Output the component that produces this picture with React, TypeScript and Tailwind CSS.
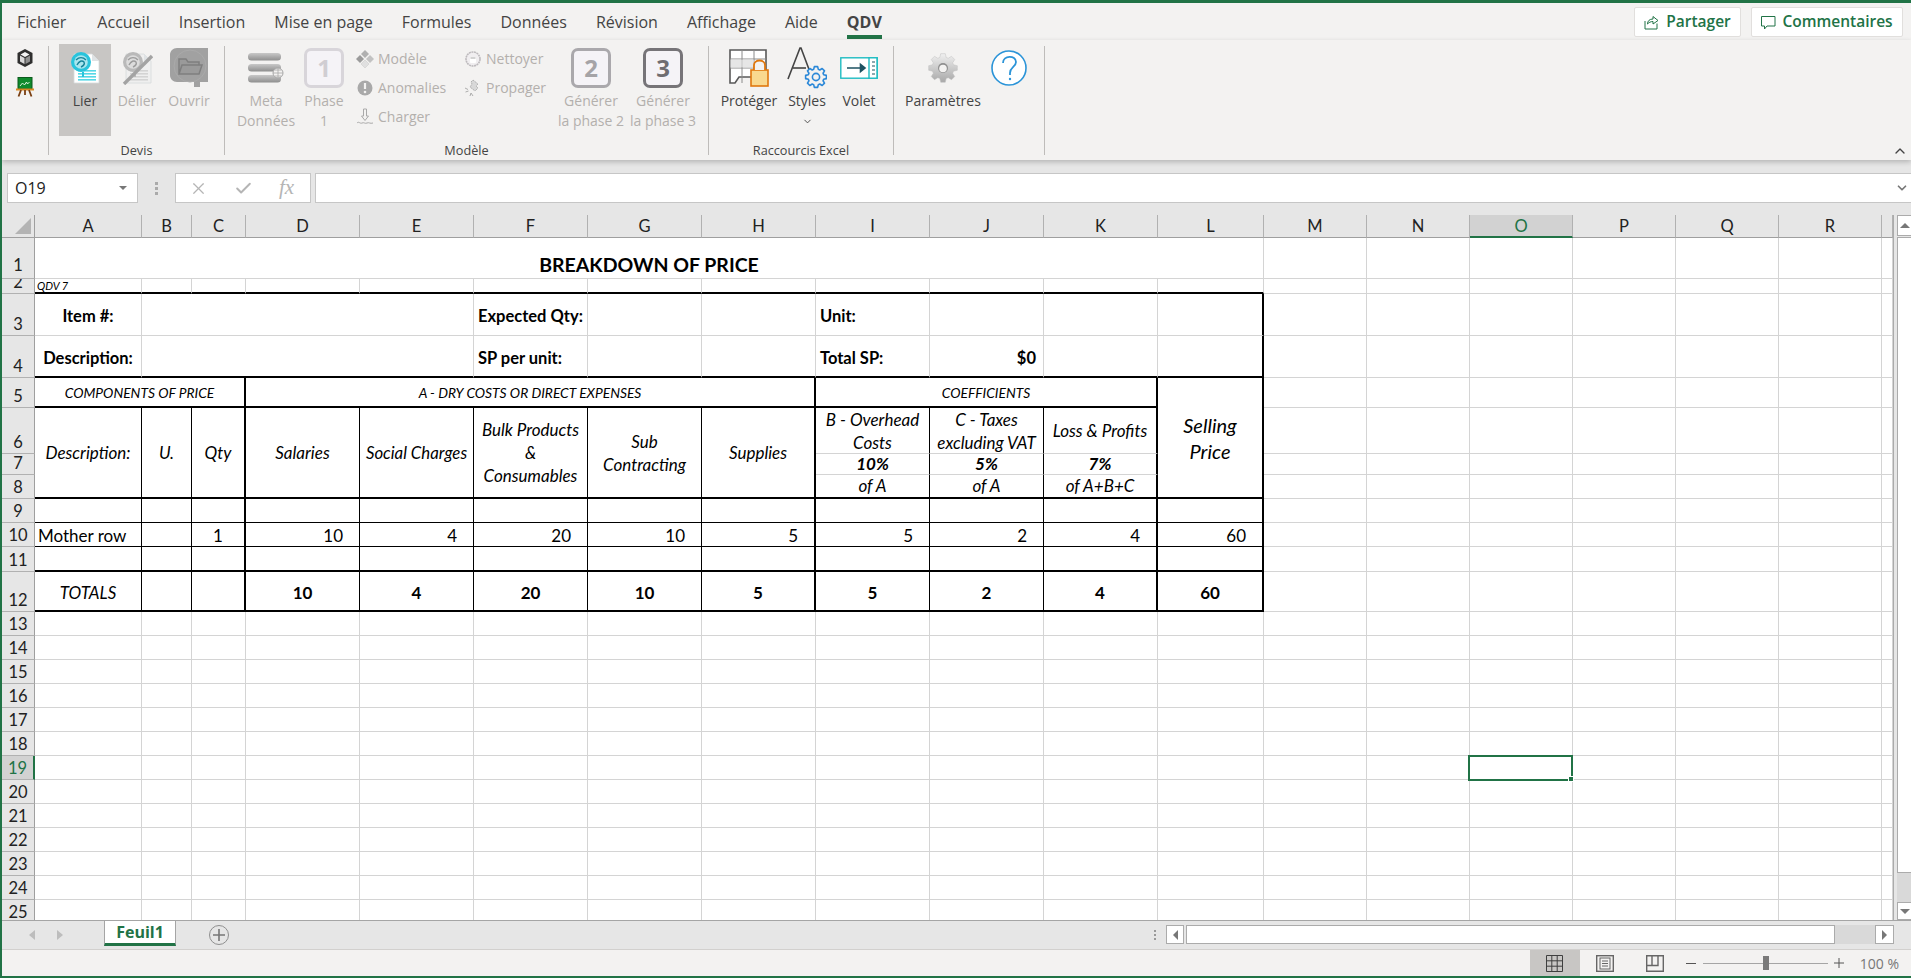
import React from "react"
import { Check, ChevronDown, ChevronUp, X } from "lucide-react"

const tabs = ["Fichier", "Accueil", "Insertion", "Mise en page", "Formules", "Données", "Révision", "Affichage", "Aide"]
const letters = ["A", "B", "C", "D", "E", "F", "G", "H", "I", "J", "K", "L", "M", "N", "O", "P", "Q", "R", ""]

const RIGHT = {
  g: "border-r border-r-[#d4d4d4]",
  t: "border-r border-r-black",
  k: "border-r-2 border-r-black",
}
const BOTTOM = {
  g: "border-b border-b-[#d4d4d4]",
  t: "border-b border-b-black",
  k: "border-b-2 border-b-black",
}
type Line = "g" | "t" | "k"

const gearPath = (cx: number, cy: number, ro: number, ri: number, n: number) => {
  const pts: string[] = []
  for (let i = 0; i < n; i++) {
    const a = (i / n) * Math.PI * 2
    const w = Math.PI / n
    const add = (r: number, t: number) =>
      pts.push(`${(cx + r * Math.cos(t)).toFixed(2)} ${(cy + r * Math.sin(t)).toFixed(2)}`)
    add(ri, a - w * 0.75)
    add(ro, a - w * 0.4)
    add(ro, a + w * 0.4)
    add(ri, a + w * 0.75)
  }
  return `M${pts.join("L")}Z`
}

function C({ r = "g", b = "g", className = "", children }: { r?: Line; b?: Line; className?: string; children?: React.ReactNode }) {
  return <div className={`${RIGHT[r]} ${BOTTOM[b]} flex min-w-0 overflow-hidden whitespace-nowrap ${className}`}>{children}</div>
}

function RH({ n, active }: { n: number; active?: boolean }) {
  return (
    <div
      className={`flex items-end justify-center overflow-hidden border-b border-b-[#b1b1b1] text-[16.5px] leading-[21px] ${n === 1 ? "pb-[2px]" : ""} ${
        active ? "border-r-2 border-r-[#217346] bg-[#d2d2d2] text-[#217346]" : "border-r border-r-[#9f9f9f] bg-[#e6e6e6] text-[#222]"
      }`}
    >
      {n}
    </div>
  )
}

function Tail({ b = "g" }: { b?: Line }) {
  return (
    <>
      {[0, 1, 2, 3, 4, 5, 6].map((i) => (
        <C key={i} b={b} />
      ))}
    </>
  )
}

// colonnes D..L des lignes 9 a 12
function DataRow({ n, b, vals, label, qty, bold }: { n: number; b: Line; vals?: (string | number)[]; label?: React.ReactNode; qty?: number; bold?: boolean }) {
  const align = bold ? "items-center justify-center pt-[3px] font-bold" : "items-center justify-end pt-[2px] pr-[16px]"
  const rights: Line[] = ["t", "t", "t", "t", "k", "t", "t", "k", "k"]
  return (
    <>
      <RH n={n} />
      <C r="t" b={b} className={bold ? "items-center justify-center pt-[3px] italic" : "items-center pt-[2px] pl-[3px]"}>
        {label}
      </C>
      <C r="t" b={b} />
      <C r="k" b={b} className="items-center justify-center pt-[2px]">
        {qty}
      </C>
      {rights.map((r, i) => (
        <C key={i} r={r} b={b} className={align}>
          {vals ? vals[i] : null}
        </C>
      ))}
      <Tail />
    </>
  )
}

function Sheet() {
  return (
    <div className="grid h-full w-[1891px] flex-none grid-cols-[33px_107px_50px_54px_repeat(8,114px)_106px_repeat(6,103px)_11px] grid-rows-[23px_41px_15px_42px_42px_30px_46px_21px_24px_24px_24px_25px_40px_repeat(13,24px)] overflow-hidden bg-white text-[17px] leading-[20px] text-black [font-family:Lato,sans-serif]">
      <div className="flex items-end justify-end border-r border-b border-r-[#9f9f9f] border-b-[#9f9f9f] bg-[#e6e6e6] pr-[3px] pb-[3px]">
        <div className="h-0 w-0 border-b-[16px] border-l-[16px] border-b-[#b4b4b4] border-l-transparent" />
      </div>
      {letters.map((l, i) => (
        <div
          key={i}
          className={`flex items-center justify-center text-[16.5px] ${
            l === "O"
              ? "border-r border-b-2 border-r-[#b1b1b1] border-b-[#217346] bg-[#d2d2d2] text-[#217346]"
              : "border-r border-b border-r-[#b1b1b1] border-b-[#9f9f9f] bg-[#e6e6e6] text-[#222]"
          }`}
        >
          {l}
        </div>
      ))}

      <RH n={1} />
      <C className="col-span-12 items-center justify-center pt-[13px] text-[19.5px] font-bold">BREAKDOWN OF PRICE</C>
      <Tail />

      <RH n={2} />
      <C b="k" className="items-center pl-[2px] text-[11px] italic">
        QDV 7
      </C>
      {[0, 1, 2, 3, 4, 5, 6, 7, 8, 9, 10].map((i) => (
        <C key={i} b="k" />
      ))}
      <Tail />

      <RH n={3} />
      <C className="items-center justify-center pt-[2px] text-[16.5px] font-bold">Item #:</C>
      <C className="col-span-4" />
      <C className="items-center pt-[2px] pl-[4px] text-[16.5px] font-bold">Expected Qty:</C>
      <C />
      <C />
      <C className="items-center pt-[2px] pl-[4px] text-[16.5px] font-bold">Unit:</C>
      <C />
      <C />
      <C r="k" />
      <Tail />

      <RH n={4} />
      <C b="k" className="items-center justify-center pt-[3px] text-[16.5px] font-bold">
        Description:
      </C>
      <C b="k" className="col-span-4" />
      <C b="k" className="items-center pt-[3px] pl-[4px] text-[16.5px] font-bold">
        SP per unit:
      </C>
      <C b="k" />
      <C b="k" />
      <C b="k" className="items-center pt-[3px] pl-[4px] text-[16.5px] font-bold">
        Total SP:
      </C>
      <C b="k" className="items-center justify-end pt-[3px] pr-[7px] text-[16.5px] font-bold">
        $0
      </C>
      <C b="k" />
      <C r="k" b="k" />
      <Tail />

      <RH n={5} />
      <C r="k" b="k" className="col-span-3 items-center justify-center pt-[1px] text-[13.8px] italic">
        COMPONENTS OF PRICE
      </C>
      <C r="k" b="k" className="col-span-5 items-center justify-center pt-[1px] text-[13.8px] italic">
        A - DRY COSTS OR DIRECT EXPENSES
      </C>
      <C r="k" b="k" className="col-span-3 items-center justify-center pt-[1px] text-[13.8px] italic">
        COEFFICIENTS
      </C>
      <C r="k" b="k" className="row-span-4 flex-col items-center justify-center text-[20px] leading-[26px] italic">
        <span>Selling</span>
        <span>Price</span>
      </C>
      <Tail />

      <RH n={6} />
      <C r="t" b="k" className="row-span-3 items-center justify-center italic">
        Description:
      </C>
      <C r="t" b="k" className="row-span-3 items-center justify-center italic">
        U.
      </C>
      <C r="k" b="k" className="row-span-3 items-center justify-center italic">
        Qty
      </C>
      <C r="t" b="k" className="row-span-3 items-center justify-center italic">
        Salaries
      </C>
      <C r="t" b="k" className="row-span-3 items-center justify-center text-[16.8px] italic">
        Social Charges
      </C>
      <C r="t" b="k" className="row-span-3 flex-col items-center justify-center leading-[23px] italic">
        <span>Bulk Products</span>
        <span>&amp;</span>
        <span>Consumables</span>
      </C>
      <C r="t" b="k" className="row-span-3 flex-col items-center justify-center leading-[23px] italic">
        <span>Sub</span>
        <span>Contracting</span>
      </C>
      <C r="k" b="k" className="row-span-3 items-center justify-center italic">
        Supplies
      </C>
      <C r="t" className="flex-col items-center justify-center leading-[23px] italic">
        <span>B - Overhead</span>
        <span>Costs</span>
      </C>
      <C r="t" className="flex-col items-center justify-center leading-[23px] italic">
        <span>C - Taxes</span>
        <span>excluding VAT</span>
      </C>
      <C r="k" className="items-center justify-center italic">
        Loss &amp; Profits
      </C>
      <Tail />

      <RH n={7} />
      <C r="t" className="items-center justify-center font-bold italic">
        10%
      </C>
      <C r="t" className="items-center justify-center font-bold italic">
        5%
      </C>
      <C r="k" className="items-center justify-center font-bold italic">
        7%
      </C>
      <Tail />

      <RH n={8} />
      <C r="t" b="k" className="items-center justify-center italic">
        of A
      </C>
      <C r="t" b="k" className="items-center justify-center italic">
        of A
      </C>
      <C r="k" b="k" className="items-center justify-center italic">
        of A+B+C
      </C>
      <Tail />

      <DataRow n={9} b="t" />
      <DataRow n={10} b="t" label="Mother row" qty={1} vals={[10, 4, 20, 10, 5, 5, 2, 4, 60]} />
      <DataRow n={11} b="k" />
      <DataRow n={12} b="k" label="TOTALS" bold vals={[10, 4, 20, 10, 5, 5, 2, 4, 60]} />

      {[13, 14, 15, 16, 17, 18, 19, 20, 21, 22, 23, 24, 25].map((n) => (
        <React.Fragment key={n}>
          <RH n={n} active={n === 19} />
          {letters.map((l, i) =>
            n === 19 && l === "O" ? (
              <div key={i} className="relative border-r border-b border-r-[#d4d4d4] border-b-[#d4d4d4]">
                <div className="absolute -top-px -right-px -bottom-[2px] -left-[2px] z-10 border-2 border-[#217346]" />
                <div className="absolute -right-[2px] -bottom-[3px] z-20 h-[6px] w-[6px] border border-white bg-[#217346]" />
              </div>
            ) : (
              <C key={i} />
            )
          )}
        </React.Fragment>
      ))}
    </div>
  )
}

function CubeIcon() {
  return (
    <svg width="18" height="20" viewBox="0 0 18 20">
      <path d="M9 1l7.5 4v10L9 19l-7.5-4V5z" fill="#2f2f2f" />
      <path d="M4.5 6.5L9 4l4.5 2.5L9 9z" fill="#f4f4f4" />
      <path d="M4 7.5l4.5 2.5v6L4 13.5z" fill="#d9d9d9" />
      <path d="M14 7.5L9.5 10v6l4.5-2.5z" fill="#8f8f8f" />
    </svg>
  )
}

function BoardIcon() {
  return (
    <svg width="18" height="20" viewBox="0 0 18 20">
      <rect x="2" y="0.5" width="14" height="11.5" fill="#0f8a2c" stroke="#0b5a1c" />
      <path d="M4 9l2.5-3 2 2 2-3 1 2 2-2" stroke="#eaf9ea" fill="none" strokeWidth="0.9" />
      <path d="M0 12.5h18" stroke="#d98a24" strokeWidth="2" />
      <path d="M5 13l-2.5 6.5M13 13l2.5 6.5M9 13v5" stroke="#7a3f12" strokeWidth="1.8" />
    </svg>
  )
}

function DocIcon({ muted }: { muted?: boolean }) {
  const ring = muted ? "#b9b9b9" : "#29c4dc"
  const inner = muted ? "#dcdcdc" : "#a9e6ee"
  const line = muted ? "#d4d4d4" : "#55d8e6"
  return (
    <svg width="32" height="34" viewBox="0 0 32 34">
      <path d="M5 3h18l7 7v22H5z" fill={muted ? "#efefef" : "#fff"} stroke="#d6dadc" strokeWidth="0.8" />
      <path d="M23 3l7 7h-7z" fill="#dfe3e5" />
      {[19, 22, 25, 28].map((y) => (
        <rect key={y} x="9" y={y} width="18" height="1.6" fill={line} />
      ))}
      <circle cx="12" cy="11" r="10" fill={ring} />
      <circle cx="12" cy="11" r="6.8" fill={inner} />
      <path d="M7 9c3-3 7-3 10 0M8 14c2-4 5-5 7-3 1 2-1 4-3 5" stroke={muted ? "#9c9c9c" : "#17849a"} strokeWidth="1.4" fill="none" />
      <path d="M14 21v5" stroke={ring} strokeWidth="2" />
      {muted && <path d="M3 33L31 5" stroke="#a3a3a3" strokeWidth="3.4" />}
    </svg>
  )
}

function FolderIcon() {
  return (
    <svg width="38" height="39" viewBox="0 0 38 39">
      <path d="M7 0h31v34h-8v5h-6v-5H7c-4 0-7-3-7-7V7c0-4 3-7 7-7z" fill="#a1a1a1" />
      <circle cx="20" cy="18" r="16" fill="none" stroke="#aaaaaa" strokeWidth="1" />
      <path d="M9 26V11h7l2 3h11v3M9 26l3-9h20l-3 9z" fill="#9a9a9a" stroke="#7f7f7f" strokeWidth="1.5" />
    </svg>
  )
}

function StackIcon() {
  return (
    <svg width="36" height="30" viewBox="0 0 36 30">
      <defs>
        <linearGradient id="bar" x1="0" x2="0" y1="0" y2="1">
          <stop offset="0" stopColor="#c8c8c8" />
          <stop offset="1" stopColor="#8e8e8e" />
        </linearGradient>
      </defs>
      <rect x="0" y="0" width="33" height="7.5" rx="3.5" fill="url(#bar)" />
      <rect x="0" y="11" width="33" height="7.5" rx="3.5" fill="url(#bar)" />
      <rect x="0" y="22" width="33" height="7.5" rx="3.5" fill="url(#bar)" />
      <circle cx="30" cy="20" r="5" fill="#f3f2f1" stroke="#a8a8a8" />
      <path d="M25 20h10M30 15v10M26.5 17h7M26.5 23h7" stroke="#a8a8a8" strokeWidth="0.8" />
    </svg>
  )
}

function NumBox({ n, tone }: { n: number; tone: 1 | 2 | 3 }) {
  const cls =
    tone === 1
      ? "border-[#d8d5da] text-[#d0cdd2]"
      : tone === 2
        ? "border-[#aaa8ac] text-[#a5a3a7]"
        : "border-[#767478] text-[#6f6d71]"
  return <div className={`flex h-[40px] w-[40px] items-center justify-center rounded-[7px] border-[3px] bg-[#f5f3f7] text-[24px] font-bold ${cls}`}>{n}</div>
}

function SmallIcon({ kind }: { kind: string }) {
  if (kind === "model")
    return (
      <svg width="18" height="18" viewBox="0 0 18 18">
        <path d="M9 0l4 4-4 4-4-4z" fill="#b0b0b0" />
        <path d="M4 5l4 4-4 4-4-4z" fill="#9b9b9b" />
        <path d="M14 5l4 4-4 4-4-4z" fill="#c2c2c2" />
        <path d="M9 10l4 4-4 4-4-4z" fill="#e0e0e0" stroke="#c8c8c8" strokeWidth="0.5" />
      </svg>
    )
  if (kind === "anom")
    return (
      <svg width="18" height="18" viewBox="0 0 18 18">
        <circle cx="9" cy="9" r="7.5" fill="#a9a9a9" />
        <path d="M9 4v6" stroke="#f3f2f1" strokeWidth="2.2" />
        <circle cx="9" cy="13" r="1.3" fill="#f3f2f1" />
      </svg>
    )
  if (kind === "load")
    return (
      <svg width="18" height="18" viewBox="0 0 18 18">
        <path d="M7.5 1h3v7h2L9 12.5 5.5 8h2z" fill="none" stroke="#a9a9a9" />
        <path d="M1 15c2-2 3 1 5 0s3 1 5 0 3 1 6 0" fill="none" stroke="#a9a9a9" />
      </svg>
    )
  if (kind === "clean")
    return (
      <svg width="16" height="16" viewBox="0 0 16 16">
        <circle cx="8" cy="8" r="7" fill="#f0eef0" stroke="#bdbabd" strokeWidth="1.6" strokeDasharray="2 0.6" />
        <rect x="5" y="6" width="6" height="6" rx="1" fill="#fff" />
        <path d="M5.5 7h5" stroke="#a5a5a5" />
      </svg>
    )
  return (
    <svg width="18" height="18" viewBox="0 0 18 18">
      <path d="M9 1l5 4-2 2 2 2-3 3-5-4 2-3-1-2z" fill="#d8d8d8" stroke="#9f9f9f" strokeWidth="0.8" strokeDasharray="1.5 0.7" />
      <path d="M1 9l3 1.5M1.5 13l3-1M6 17l1-3M9 17l-2-3" stroke="#a5a5a5" strokeWidth="0.9" />
    </svg>
  )
}

function TableLockIcon() {
  return (
    <svg width="40" height="38" viewBox="0 0 40 38">
      <path d="M1 1h36v27H10l-4 6H1z" fill="#fff" stroke="#595959" strokeWidth="1.6" />
      <path d="M1 10h36M1 19h24M13 1v33M25 1v20" stroke="#8a8a8a" strokeWidth="1" />
      <rect x="1.5" y="10.5" width="11" height="8" fill="#e6e6e6" />
      <rect x="13.5" y="10.5" width="11" height="8" fill="#e6e6e6" />
      <rect x="22" y="21" width="17" height="16" fill="#f9d98f" stroke="#e0770d" strokeWidth="1.6" />
      <path d="M25 21v-5c0-6 11-6 11 0v5" fill="#f3f2f1" stroke="#e0770d" strokeWidth="1.8" />
    </svg>
  )
}

function StylesIcon() {
  return (
    <svg width="40" height="42" viewBox="0 0 40 42">
      <path d="M1 32L13 1h1l9 24" fill="none" stroke="#444" strokeWidth="1.6" />
      <path d="M6 21h13" stroke="#444" strokeWidth="1.6" />
      <path d={gearPath(29, 30, 10.5, 8, 8)} fill="#f3f2f1" stroke="#2b88d8" strokeWidth="1.6" strokeLinejoin="round" />
      <circle cx="29" cy="30" r="3.6" fill="none" stroke="#2b88d8" strokeWidth="1.6" />
    </svg>
  )
}

function VoletIcon() {
  return (
    <svg width="38" height="22" viewBox="0 0 38 22">
      <rect x="0.8" y="0.8" width="36.4" height="20.4" fill="#fff" stroke="#1ebcc2" strokeWidth="1.4" />
      <rect x="29" y="0.8" width="8" height="20.4" fill="#fff" stroke="#1ebcc2" strokeWidth="1.4" />
      <path d="M7 11h17M20.5 7.5L25 11l-4.5 3.5z" stroke="#1d5261" strokeWidth="1.6" fill="#1d5261" />
      <path d="M32 5h3M32 9h3M32 13h3M32 17h3" stroke="#1d5261" strokeWidth="1.2" />
    </svg>
  )
}

function GearIcon() {
  return (
    <svg width="30" height="30" viewBox="0 0 30 30">
      <defs>
        <linearGradient id="gr" x1="0" x2="0" y1="0" y2="1">
          <stop offset="0" stopColor="#f0f0f0" />
          <stop offset="1" stopColor="#a8a8a8" />
        </linearGradient>
      </defs>
      <path d={gearPath(15, 15, 14.5, 11, 8)} fill="url(#gr)" stroke="#c0c0c0" strokeWidth="0.5" strokeLinejoin="round" />
      <circle cx="15" cy="15" r="5" fill="#8e8e8e" />
      <circle cx="15" cy="15.5" r="3.8" fill="#f3f2f1" />
    </svg>
  )
}

function HelpIcon() {
  return (
    <svg width="36" height="36" viewBox="0 0 36 36">
      <circle cx="18" cy="18" r="17" fill="#fff" stroke="#2b94d8" strokeWidth="1.6" />
      <path d="M12 13c0-8 13-8 13-1 0 5-6 5-6 11v2" fill="none" stroke="#2b94d8" strokeWidth="1.8" />
      <circle cx="19" cy="29" r="1.2" fill="#2b94d8" />
    </svg>
  )
}

function RibbonBtn({ w, icon, lines, muted, active, children }: { w: string; icon?: React.ReactNode; lines?: string[]; muted?: boolean; active?: boolean; children?: React.ReactNode }) {
  return (
    <div className={`flex h-[92px] flex-col items-center ${w} ${active ? "bg-[#c8c6c4]" : ""}`}>
      <div className="flex h-[47px] items-center justify-center">{icon}</div>
      {(lines || []).map((l) => (
        <span key={l} className={`leading-[20px] whitespace-nowrap ${muted ? "text-[#b3b0ad]" : "text-[#444]"}`}>
          {l}
        </span>
      ))}
      {children}
    </div>
  )
}

function Group({ w, pl, label, children }: { w: string; pl: string; label: string; children: React.ReactNode }) {
  return (
    <div className={`flex h-full flex-none flex-col pt-[4px] ${w}`}>
      <div className={`flex h-[92px] ${pl}`}>{children}</div>
      <div className="mt-[4px] text-center text-[12.7px] leading-[20px] text-[#444]">{label}</div>
    </div>
  )
}

function Sep() {
  return <div className="mt-[6px] mb-[5px] w-px flex-none bg-[#bebcba]" />
}

function SmallRow({ kind, label, w }: { kind: string; label: string; w: string }) {
  return (
    <div className={`flex h-[29px] items-center gap-[4px] whitespace-nowrap text-[#b3b0ad] ${w}`}>
      <span className="flex w-[19px] justify-center">
        <SmallIcon kind={kind} />
      </span>
      {label}
    </div>
  )
}

function Ribbon() {
  return (
    <div className="relative z-10 flex h-[120px] flex-none bg-[#f3f2f1] text-[14px] shadow-[0_2px_5px_rgba(0,0,0,0.22)]">
      <div className="flex w-[46px] flex-none flex-col items-center gap-[9px] pt-[8px]">
        <CubeIcon />
        <BoardIcon />
      </div>
      <Sep />
      <Group w="w-[175px]" pl="pl-[10px]" label="Devis">
        <RibbonBtn w="w-[52px]" active icon={<DocIcon />} lines={["Lier"]} />
        <RibbonBtn w="w-[52px]" muted icon={<DocIcon muted />} lines={["Délier"]} />
        <RibbonBtn w="w-[52px]" muted icon={<FolderIcon />} lines={["Ouvrir"]} />
      </Group>
      <Sep />
      <Group w="w-[483px]" pl="pl-[5px]" label="Modèle">
        <RibbonBtn w="w-[72px]" muted icon={<StackIcon />} lines={["Meta", "Données"]} />
        <RibbonBtn w="w-[44px]" muted icon={<NumBox n={1} tone={1} />} lines={["Phase", "1"]} />
        <div className="ml-[9px] w-[108px]">
          <SmallRow w="w-[108px]" kind="model" label="Modèle" />
          <SmallRow w="w-[108px]" kind="anom" label="Anomalies" />
          <SmallRow w="w-[108px]" kind="load" label="Charger" />
        </div>
        <div className="w-[92px]">
          <SmallRow w="w-[92px]" kind="clean" label="Nettoyer" />
          <SmallRow w="w-[92px]" kind="prop" label="Propager" />
        </div>
        <RibbonBtn w="w-[72px]" muted icon={<NumBox n={2} tone={2} />} lines={["Générer", "la phase 2"]} />
        <RibbonBtn w="w-[72px]" muted icon={<NumBox n={3} tone={3} />} lines={["Générer", "la phase 3"]} />
      </Group>
      <Sep />
      <Group w="w-[184px]" pl="pl-[5px]" label="Raccourcis Excel">
        <RibbonBtn w="w-[70px]" icon={<TableLockIcon />} lines={["Protéger"]} />
        <RibbonBtn w="w-[46px]" icon={<StylesIcon />} lines={["Styles"]}>
          <ChevronDown size={11} className="mt-[5px] text-[#444]" />
        </RibbonBtn>
        <RibbonBtn w="w-[58px]" icon={<VoletIcon />} lines={["Volet"]} />
      </Group>
      <Sep />
      <div className="flex h-full w-[150px] flex-none pt-[4px] pl-[4px]">
        <RibbonBtn w="w-[90px]" icon={<GearIcon />} lines={["Paramètres"]} />
        <RibbonBtn w="w-[42px]" icon={<HelpIcon />} />
      </div>
      <Sep />
      <div className="flex flex-1 items-end justify-end pr-[3px] pb-[1px]">
        <ChevronUp size={16} className="text-[#444]" />
      </div>
    </div>
  )
}

function FormulaBar() {
  return (
    <div className="flex h-[55px] flex-none items-start bg-[#e6e6e6] pt-[13px] pl-[5px] text-[#222]">
      <div className="flex h-[30px] w-[131px] items-center justify-between border border-[#c6c6c6] bg-white pr-[10px] pl-[7px] text-[16px]">
        O19
        <div className="h-0 w-0 border-x-[4px] border-t-[4px] border-x-transparent border-t-[#777]" />
      </div>
      <div className="flex h-[30px] w-[37px] flex-col items-center justify-center gap-[2px]">
        <span className="h-[3px] w-[3px] bg-[#aaa]" />
        <span className="h-[3px] w-[3px] bg-[#aaa]" />
        <span className="h-[3px] w-[3px] bg-[#aaa]" />
      </div>
      <div className="flex h-[30px] w-[136px] items-center border border-[#c6c6c6] bg-white text-[#b5b5b5]">
        <X size={19} strokeWidth={1.5} className="ml-[13px]" />
        <Check size={19} strokeWidth={2.5} className="ml-[26px]" />
        <span className="ml-[26px] text-[21px] italic [font-family:'Liberation_Serif',serif]">fx</span>
      </div>
      <div className="ml-[4px] flex h-[30px] flex-1 items-center justify-end border border-r-0 border-[#c6c6c6] bg-white pr-[2px]">
        <ChevronDown size={14} strokeWidth={3} className="text-[#777]" />
      </div>
    </div>
  )
}

function VScroll() {
  return (
    <div className="flex flex-1 flex-col border-l border-l-[#ababab] bg-[#e6e6e6] pl-[3px]">
      <div className="flex h-[21px] flex-none items-center justify-center border border-r-0 border-[#ababab] bg-white">
        <div className="h-0 w-0 border-x-[5px] border-b-[5px] border-x-transparent border-b-[#777]" />
      </div>
      <div className="mt-[1px] flex-1 border-x-0 border-y border-l border-[#ababab] bg-white" />
      <div className="h-[29px] flex-none bg-[#d9d9d9]" />
      <div className="flex h-[18px] flex-none items-center justify-center border border-r-0 border-[#ababab] bg-white">
        <div className="h-0 w-0 border-x-[5px] border-t-[5px] border-x-transparent border-t-[#777]" />
      </div>
    </div>
  )
}

function SheetTabs() {
  return (
    <div className="flex h-[29px] flex-none border-t border-t-[#a5a5a5] bg-[#e6e6e6]">
      <div className="flex w-[102px] flex-none items-center gap-[22px] pl-[27px]">
        <div className="h-0 w-0 border-y-[5px] border-r-[6px] border-y-transparent border-r-[#bdbdbd]" />
        <div className="h-0 w-0 border-y-[5px] border-l-[6px] border-y-transparent border-l-[#bdbdbd]" />
      </div>
      <div className="flex h-[25px] w-[72px] flex-none items-center justify-center border-x border-b-[3px] border-x-[#a5a5a5] border-b-[#217346] bg-white text-[16px] font-bold text-[#217346]">
        Feuil1
      </div>
      <div className="mt-[4px] ml-[33px] flex h-[20px] w-[20px] items-center justify-center rounded-full border border-[#8f8f8f] text-[#777]">
        <svg width="12" height="12" viewBox="0 0 12 12">
          <path d="M6 0v12M0 6h12" stroke="#777" strokeWidth="1.6" />
        </svg>
      </div>
      <div className="flex-1" />
      <div className="flex w-[23px] flex-none flex-col items-center justify-center gap-[2px]">
        <span className="h-[2px] w-[2px] bg-[#999]" />
        <span className="h-[2px] w-[2px] bg-[#999]" />
        <span className="h-[2px] w-[2px] bg-[#999]" />
      </div>
      <div className="mt-[4px] flex h-[19px] w-[18px] flex-none items-center justify-center border border-[#ababab] bg-white">
        <div className="h-0 w-0 border-y-[5px] border-r-[5px] border-y-transparent border-r-[#777]" />
      </div>
      <div className="mt-[4px] ml-[2px] h-[19px] w-[649px] flex-none border border-[#ababab] bg-white" />
      <div className="mt-[4px] h-[19px] w-[40px] flex-none bg-[#d9d9d9]" />
      <div className="mt-[4px] mr-[17px] flex h-[19px] w-[19px] flex-none items-center justify-center border border-[#ababab] bg-white">
        <div className="h-0 w-0 border-y-[5px] border-l-[5px] border-y-transparent border-l-[#777]" />
      </div>
    </div>
  )
}

function StatusBar() {
  return (
    <div className="flex h-[27px] flex-none items-center justify-end border-t border-t-[#d2d0ce] bg-[#f3f2f1] text-[14px] text-[#777]">
      <div className="flex h-full w-[50px] items-center justify-center bg-[#c8c6c4]">
        <svg width="17" height="17" viewBox="0 0 17 17">
          <path d="M.5.5h16v16H.5zM.5 5.8h16M.5 11.2h16M5.8.5v16M11.2.5v16" fill="none" stroke="#3f3f3f" />
        </svg>
      </div>
      <div className="flex h-full w-[50px] items-center justify-center">
        <svg width="18" height="17" viewBox="0 0 18 17">
          <rect x="0.7" y="0.7" width="16.6" height="15.6" fill="none" stroke="#666" strokeWidth="1.4" />
          <rect x="4" y="3" width="10" height="11" fill="none" stroke="#666" />
          <path d="M6 6h6M6 8.5h6M6 11h6" stroke="#666" />
        </svg>
      </div>
      <div className="flex h-full w-[50px] items-center justify-center">
        <svg width="18" height="17" viewBox="0 0 18 17">
          <path d="M.7.7h16.6v15.6H.7zM.7 10.5H12V.7M6 .7v9.8" fill="none" stroke="#666" strokeWidth="1.4" />
        </svg>
      </div>
      <div className="ml-[6px] h-px w-[10px] bg-[#555]" />
      <div className="relative ml-[7px] h-px w-[125px] bg-[#a5a5a5]">
        <div className="absolute -top-[7px] left-[60px] h-[14px] w-[6px] bg-[#7a7a7a]" />
      </div>
      <svg width="10" height="10" viewBox="0 0 10 10" className="ml-[6px]">
        <path d="M5 0v10M0 5h10" stroke="#555" />
      </svg>
      <span className="mr-[12px] ml-[16px]">100 %</span>
    </div>
  )
}

export default function App() {
  return (
    <div className="flex h-screen w-screen flex-col overflow-hidden border-l-2 border-l-[#217346] bg-[#f3f2f1] text-[#444] [font-family:'Open_Sans',sans-serif]">
      <div className="h-[3px] flex-none bg-[#217346]" />
      <div className="flex h-[37px] flex-none items-start justify-between bg-[#f3f2f1]">
        <div className="flex gap-[29px] pt-[9px] pl-[15px] text-[16px] leading-[20px]">
          {tabs.map((t) => (
            <span key={t} className={t === "Fichier" ? "mr-[2px]" : ""}>
              {t}
            </span>
          ))}
          <span className="relative font-bold">
            QDV
            <span className="absolute top-[23px] right-0 left-0 h-[4px] bg-[#217346]" />
          </span>
        </div>
        <div className="flex gap-[10px] pt-[4px] pr-[8px] text-[15.5px] font-semibold text-[#217346]">
          <div className="flex h-[30px] w-[107px] items-center justify-center gap-[7px] rounded-[2px] border border-[#e1dfdd] bg-white">
            <svg width="15" height="15" viewBox="0 0 15 15">
              <path d="M1 6v8h12V8.5M3.5 9c0-3 2-5 5.5-5V1.5L14 5.5 9 9V6.5C6.5 6.5 5 7.5 3.5 9z" fill="none" stroke="#217346" />
            </svg>
            Partager
          </div>
          <div className="flex h-[30px] w-[152px] items-center justify-center gap-[6px] rounded-[2px] border border-[#e1dfdd] bg-white">
            <svg width="15" height="15" viewBox="0 0 15 15">
              <path d="M.5 1.5h13.5v9.5H6L3.5 14v-3h-3z" fill="none" stroke="#217346" />
            </svg>
            Commentaires
          </div>
        </div>
      </div>
      <Ribbon />
      <FormulaBar />
      <div className="flex min-h-0 flex-1">
        <Sheet />
        <VScroll />
      </div>
      <SheetTabs />
      <StatusBar />
      <div className="h-[2px] flex-none bg-[#217346]" />
    </div>
  )
}
